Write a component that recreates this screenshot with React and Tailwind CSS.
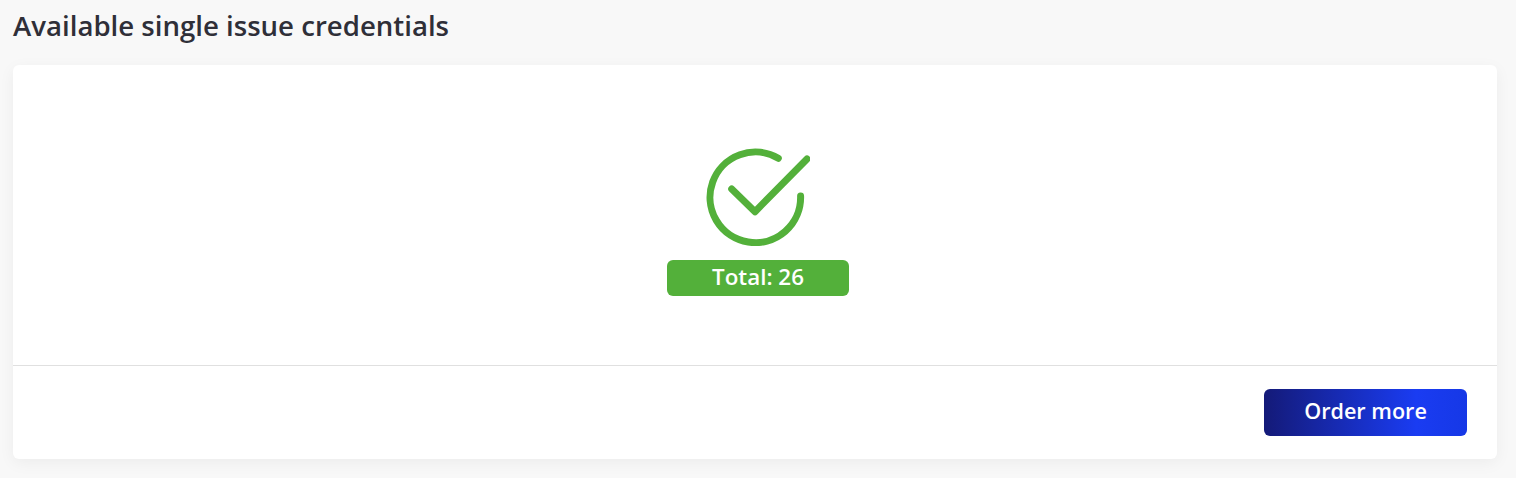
import React from 'react';

const CheckIcon = () => (
  <svg width="104" height="98" viewBox="0 0 104 98" fill="none" stroke="#53b03a" strokeWidth="7" strokeLinecap="round" strokeLinejoin="round">
    <path d="M72.3 10.3A45.3 45.3 0 1 0 94.6 48" />
    <path d="M25.7 41L49 63.7L101 11" />
  </svg>
);

const App = () => {
  return (
    <div className="h-[478px] overflow-hidden bg-[#f8f8f8] pr-[19px] pl-[13px] font-['Open_Sans',sans-serif]">
      <h2 className="h-[65px] pt-[7px] text-[27.6px] leading-[36px] font-semibold text-[#2f2f38]">Available single issue credentials</h2>
      <div className="h-[394px] rounded-md bg-white shadow-[0_4px_16px_rgba(0,0,0,0.05)]">
        <div className="flex h-[301px] flex-col items-center border-b border-[#e0e0e0] pt-[83px] pl-[6px]">
          <CheckIcon />
          <div className="mt-[14px] flex h-[36px] w-[182px] items-center justify-center rounded-md bg-[#53b03a] pb-[2px] text-[22.4px] font-semibold text-white">
            Total: 26
          </div>
        </div>
        <div className="flex justify-end pt-[23px] pr-[30px]">
          <button className="h-[47px] w-[203px] rounded-md bg-[linear-gradient(90deg,#141a78_0%,#1a3cf2_75%,#1638e6_100%)] pb-[2px] text-[21.6px] font-[550] text-white">
            Order more
          </button>
        </div>
      </div>
    </div>
  );
};

export default App;
